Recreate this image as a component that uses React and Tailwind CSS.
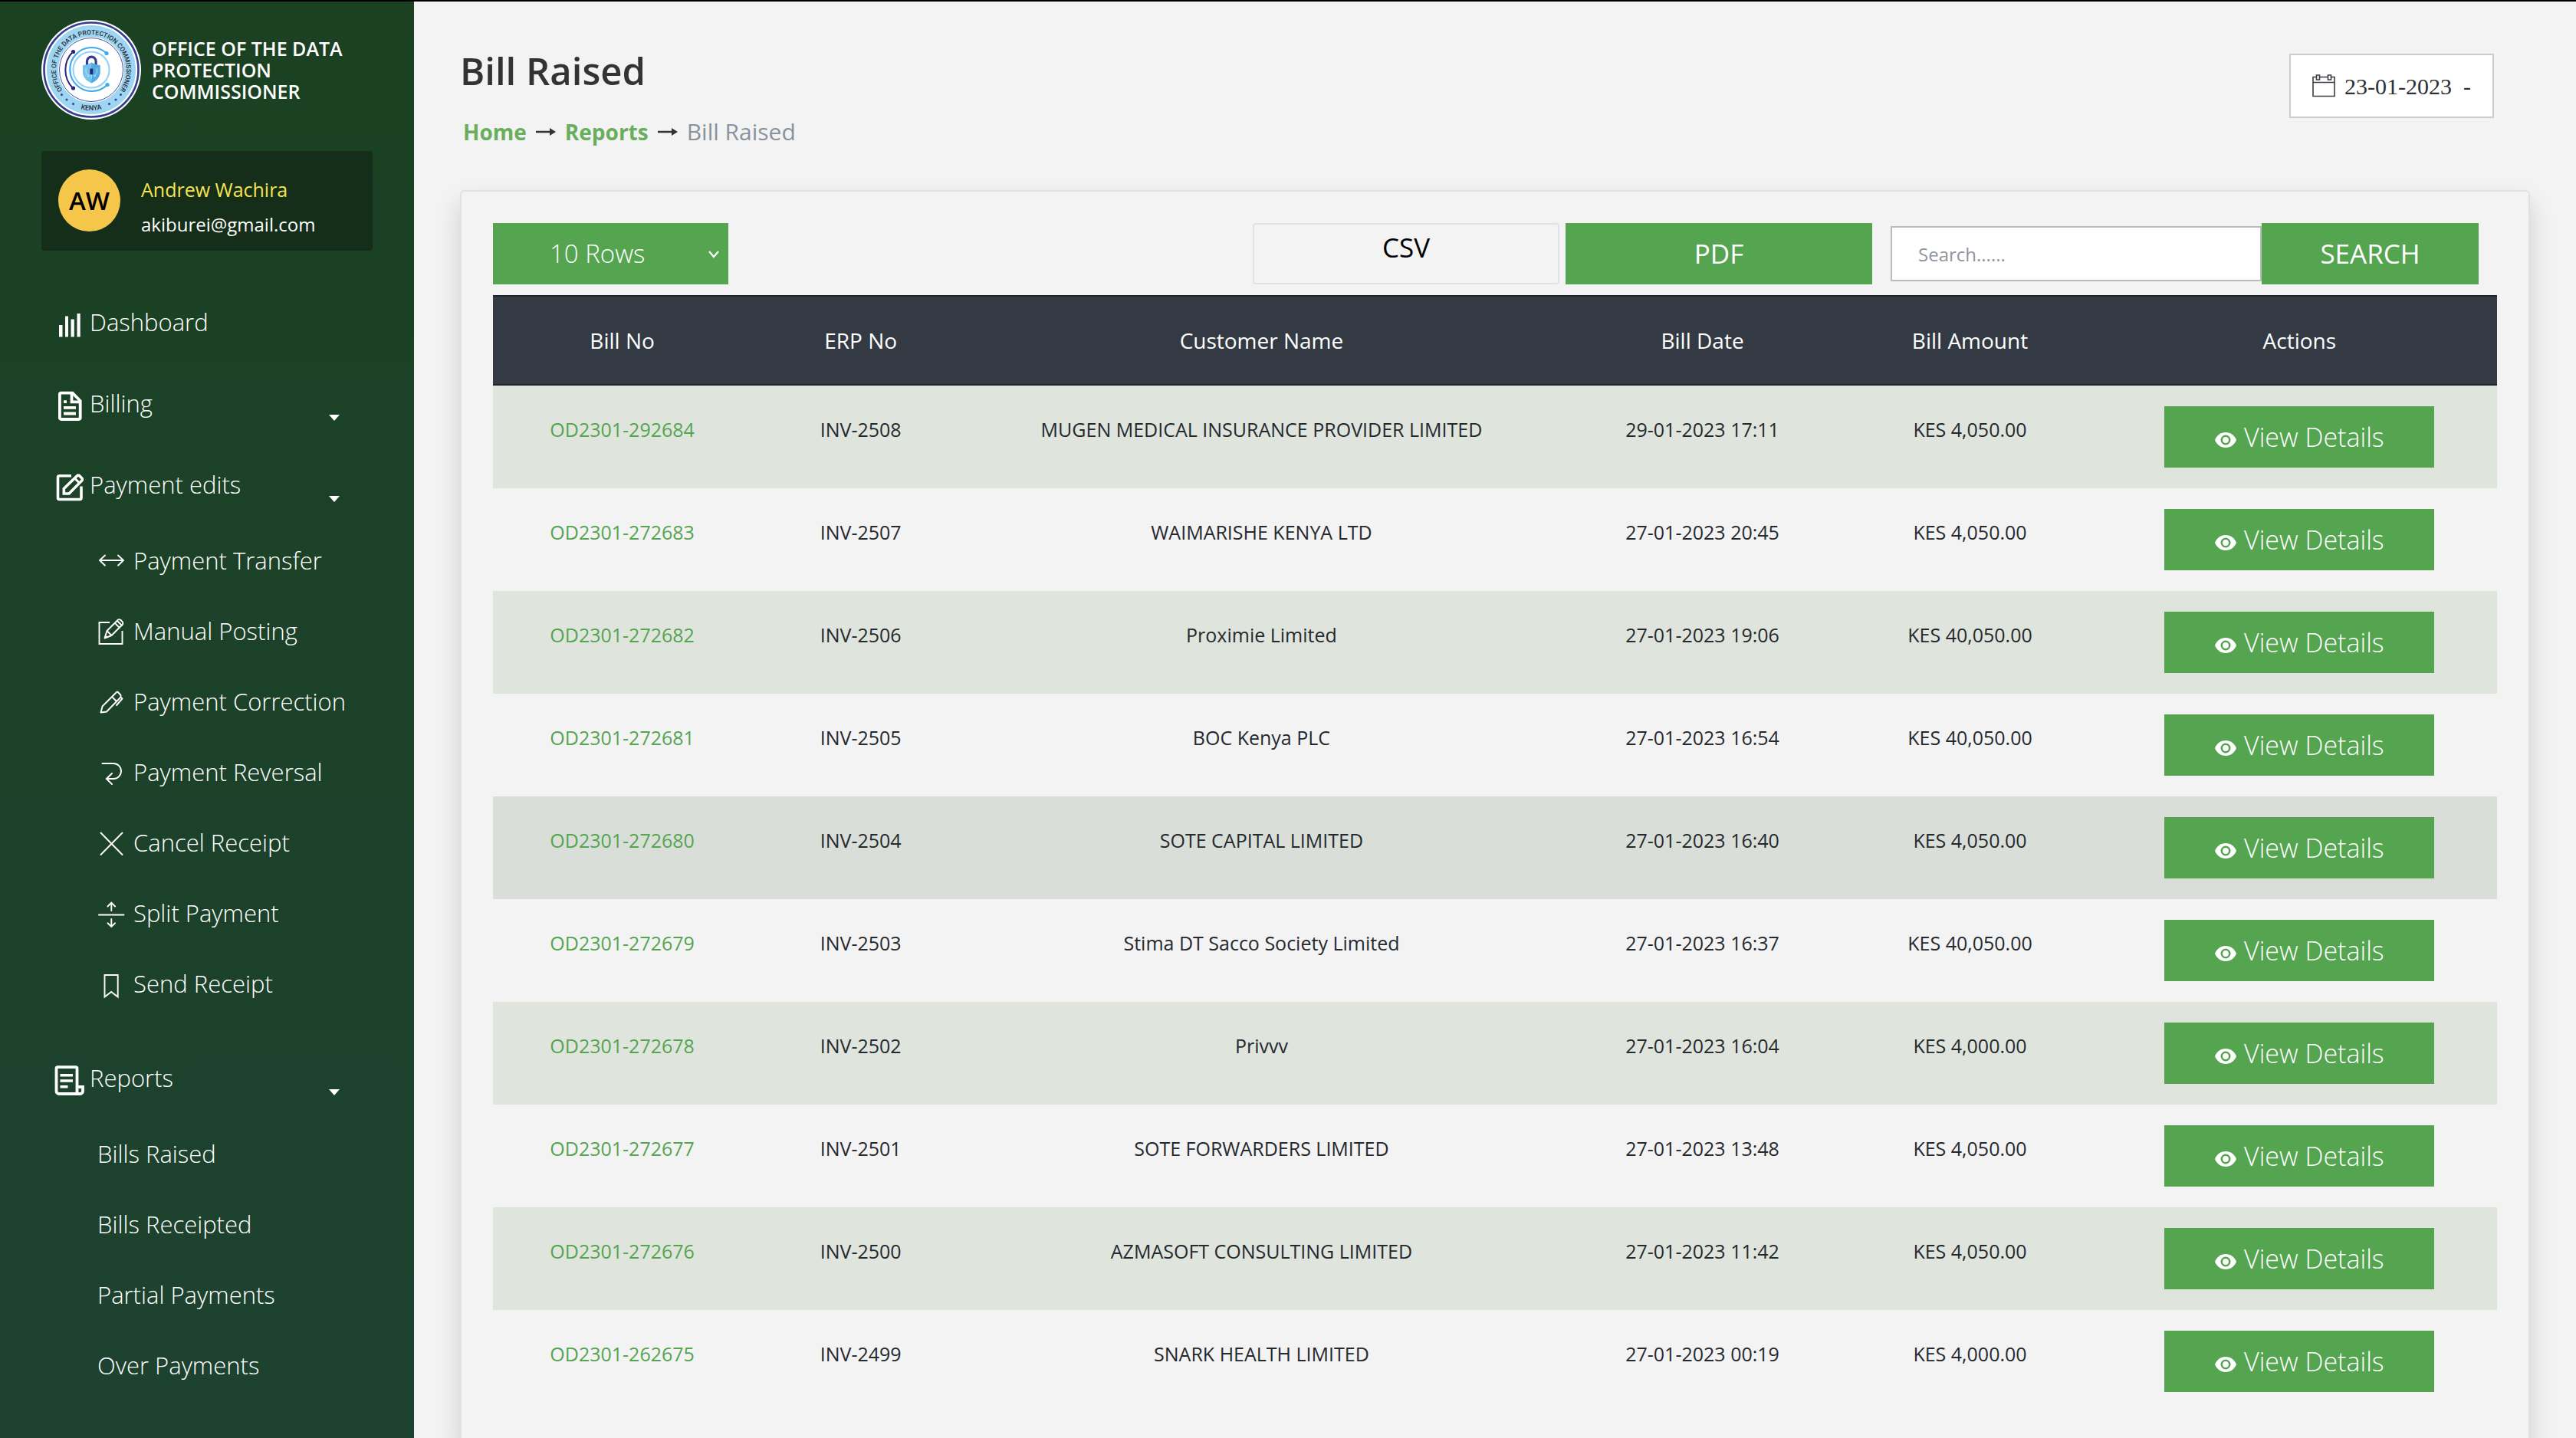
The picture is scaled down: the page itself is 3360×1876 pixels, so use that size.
import React from "react";

const rows = [
  ["OD2301-292684", "INV-2508", "MUGEN MEDICAL INSURANCE PROVIDER LIMITED", "29-01-2023 17:11", "KES 4,050.00"],
  ["OD2301-272683", "INV-2507", "WAIMARISHE KENYA LTD", "27-01-2023 20:45", "KES 4,050.00"],
  ["OD2301-272682", "INV-2506", "Proximie Limited", "27-01-2023 19:06", "KES 40,050.00"],
  ["OD2301-272681", "INV-2505", "BOC Kenya PLC", "27-01-2023 16:54", "KES 40,050.00"],
  ["OD2301-272680", "INV-2504", "SOTE CAPITAL LIMITED", "27-01-2023 16:40", "KES 4,050.00"],
  ["OD2301-272679", "INV-2503", "Stima DT Sacco Society Limited", "27-01-2023 16:37", "KES 40,050.00"],
  ["OD2301-272678", "INV-2502", "Privvv", "27-01-2023 16:04", "KES 4,000.00"],
  ["OD2301-272677", "INV-2501", "SOTE FORWARDERS LIMITED", "27-01-2023 13:48", "KES 4,050.00"],
  ["OD2301-272676", "INV-2500", "AZMASOFT CONSULTING LIMITED", "27-01-2023 11:42", "KES 4,050.00"],
  ["OD2301-262675", "INV-2499", "SNARK HEALTH LIMITED", "27-01-2023 00:19", "KES 4,000.00"],
];
const ACTIVE_ROW = 4;

function Logo() {
  return (
    <svg viewBox="0 0 130 130" className="size-[130px] shrink-0" role="img" aria-label="Office of the Data Protection Commissioner, Kenya">
      <circle cx="65" cy="65" r="65" fill="#fff" />
      <circle cx="65" cy="65" r="61.5" fill="none" stroke="#343c92" strokeWidth="2.6" />
      <circle cx="65" cy="65" r="50.5" fill="none" stroke="#9dd5f3" strokeWidth="15" />
      <circle cx="65" cy="65" r="41.5" fill="none" stroke="#343c92" strokeWidth="0.9" />
      <defs>
        <path id="seal-top" d="M29.8 94.6A46 46 0 1 1 100.2 94.6" />
        <path id="seal-bottom" d="M12 65A53 53 0 0 0 118 65" />
      </defs>
      <text fill="#2b2b33" fontSize="8.5" fontWeight="500" fontFamily="Roboto, sans-serif" textAnchor="middle">
        <textPath href="#seal-top" startOffset="50%">OFFICE OF THE DATA PROTECTION COMMISSIONER</textPath>
      </text>
      <text fill="#2b2b33" fontSize="9" fontWeight="500" fontFamily="Roboto, sans-serif" textAnchor="middle">
        <textPath href="#seal-bottom" startOffset="50%">KENYA</textPath>
      </text>
      <g fill="#343c92">
        <circle cx="26.5" cy="97.5" r="1.5" /><circle cx="33" cy="104" r="1.5" /><circle cx="41.5" cy="109.5" r="1.5" />
        <circle cx="88.5" cy="109.5" r="1.5" /><circle cx="97" cy="104" r="1.5" /><circle cx="103.5" cy="97.5" r="1.5" />
      </g>
      <g fill="none" strokeLinecap="round">
        <path d="M41 41.500A34 34 0 0 0 41 89" stroke="#26247b" strokeWidth="2" />
        <path d="M85 43.500A28.500 28.500 0 1 0 86 84.500" stroke="#42aaea" strokeWidth="2.2" />
        <circle cx="65" cy="65" r="23.500" stroke="#9ad4f4" strokeWidth="2.200" />
        <path d="M59.500 59v-5a5.800 5.800 0 0 1 11.600 0v5" stroke="#343c92" strokeWidth="3.200" />
      </g>
      <g fill="#26247b"><circle cx="41.500" cy="41.500" r="2.600" /><circle cx="41.500" cy="89" r="2.600" /></g>
      <g fill="#42aaea"><circle cx="85" cy="43.500" r="2.600" /><circle cx="86" cy="84.500" r="2.600" /></g>
      <path d="M65.300 55.500C61.500 58 58 59 54 59v9c0 7 5 11.500 11.300 14.500C71.500 79.500 76.500 75 76.500 68v-9C72.500 59 69 58 65.300 55.500z" fill="#72c2ec" />
      <path d="M65.300 55.500v27C71.500 79.500 76.500 75 76.500 68v-9C72.500 59 69 58 65.300 55.500z" fill="#4fabe0" />
      <path d="M63.300 63.500h4v7.500h-4z" fill="#26247b" />
      <g fill="none" stroke="#d8f0fb" strokeWidth="0.700"><path d="M58 63v6l2.500 3M72.500 63v6l-2.500 3M65.300 72v5" /><circle cx="61" cy="73" r="1" /><circle cx="69.500" cy="73" r="1" /></g>
    </svg>
  );
}

const mainIcon = "h-12 w-10 shrink-0";
const DashboardIcon = () => (
  <svg viewBox="0 0 40 48" className={mainIcon} fill="#fff" aria-hidden="true">
    <path d="M6 28h4.500v15.500H6zM14 16.500h4v27h-4zM21.500 20.500h4.300v23h-4.300zM29.500 13h4.200v30.500h-4.200z" />
  </svg>
);
const BillingIcon = () => (
  <svg viewBox="0 0 40 48" className={mainIcon} fill="none" stroke="#fff" strokeWidth="3.800" aria-hidden="true">
    <path d="M8.700 10.700H23.500L33.700 21V43.200a1.800 1.800 0 0 1-1.800 1.800H8.700a1.800 1.800 0 0 1-1.800-1.800V12.500a1.800 1.800 0 0 1 1.800-1.800z" />
    <path d="M22.500 11V22.300H33.500" />
    <path d="M12 22.200h4M12 29.800h16M12 37.500h16" />
  </svg>
);
const EditsIcon = () => (
  <svg viewBox="0 0 40 48" className={mainIcon} fill="none" stroke="#fff" strokeWidth="3.600" strokeLinejoin="round" aria-hidden="true">
    <path d="M22 12.700H6.500a2 2 0 0 0-2 2V41.500a2 2 0 0 0 2 2H33a2 2 0 0 0 2-2V26.500" />
    <path d="M12.300 36V29.500L29.500 12.800a2.200 2.200 0 0 1 3.200 0l3 3a2.200 2.200 0 0 1 0 3.200L19 36z" strokeLinejoin="miter" />
    <path d="M26.500 16l6 6" strokeWidth="3" />
  </svg>
);
const ReportsIcon = () => (
  <svg viewBox="0 0 40 48" className={mainIcon} fill="none" stroke="#fff" strokeWidth="3.800" aria-hidden="true">
    <path d="M29.500 45H6a3.500 3.500 0 0 1-3.500-3.500V12a1.800 1.800 0 0 1 1.800-1.800H27.700A1.800 1.800 0 0 1 29.500 12z" />
    <path d="M29.500 36H37v5.500A3.500 3.500 0 0 1 33.500 45H28" />
    <path d="M7.500 20.700H24M7.500 28H24M7.500 35.700H17.500" strokeWidth="3.500" />
  </svg>
);

const SubIcon = ({ children }) => (
  <svg viewBox="0 0 36 36" className="size-9 shrink-0 overflow-visible" fill="none" stroke="#fff" strokeWidth="1.900" strokeLinecap="round" aria-hidden="true">
    {children}
  </svg>
);
const subItems = [
  ["Payment Transfer", <path d="M2 18H33M9 11.500L2 18l7 6.700M26 11.500L33 18l-7 6.700" />],
  ["Manual Posting", <><path d="M15 7H1.500V35H31.500V18" strokeLinecap="butt" /><path d="M8.500 27.500L11.500 18 25.500 4a2.800 2.800 0 0 1 4 0l2 2a2.800 2.800 0 0 1 0 4L17.500 24zM11.500 18l6 6M22 8l6 6M25 5l6 6M9.500 24.500l2 2" strokeLinejoin="round" /></>],
  ["Payment Correction", <path d="M3.500 32.500L5.500 25V24.500L24 6q1-1 2 0l3.500 4v2.500L11 31.500zM18 12l6 6M29.500 12.500l2 2L24 23" strokeLinejoin="round" />],
  ["Payment Reversal", <path d="M5.500 7H20a10 10 0 0 1 0 20H11M18 20L10.800 27l7.200 7" />],
  ["Cancel Receipt", <path d="M3.500 5.500L31.500 34M31.500 5.500L3.500 34" />],
  ["Split Payment", <path d="M1 20.500H33.500M17.300 15V5M12.500 9.500L17.300 4.700l4.800 4.800M17.300 26V36M12.500 31.300L17.300 36l4.800-4.700" />],
  ["Send Receipt", <path d="M8.500 7H25.700V35.500L17.100 29 8.500 35.500z" strokeLinecap="butt" />],
];
const reportItems = ["Bills Raised", "Bills Receipted", "Partial Payments", "Over Payments"];

function NavItem({ icon, label, expandable }) {
  const Tag = expandable ? "button" : "a";
  const props = expandable ? { type: "button" } : { href: "#" };
  return (
    <Tag {...props} className="flex h-[106px] w-full items-center gap-1.5 pl-[71px] pr-[97px] text-left text-[31px] font-light text-white">
      {icon}
      <span>{label}</span>
      {expandable && (
        <svg viewBox="0 0 14 8" className="mb-[30px] ml-auto h-2 w-3.5 self-end" fill="#fff" aria-hidden="true"><path d="M0 0H14L7 8z" /></svg>
      )}
    </Tag>
  );
}

function Sidebar() {
  return (
    <aside className="w-[540px] shrink-0 bg-linear-to-b from-[#1b4122] to-[#1d4230] pt-6">
      <div className="flex items-center gap-3.5 px-[54px]">
        <Logo />
        <p className="whitespace-nowrap text-[25px]/7 font-semibold text-white">OFFICE OF THE DATA<br />PROTECTION<br />COMMISSIONER</p>
      </div>
      <div className="mx-[54px] mt-[41px] flex h-[130px] rounded bg-[#142e1a] pl-[22px] pt-6">
        <div className="flex size-[81px] shrink-0 items-center justify-center rounded-full bg-[#f6c64b] text-[33px] font-semibold text-black">AW</div>
        <div className="ml-[27px] mt-1 text-2xl/[45px]">
          <p className="text-[25px]/[45px] text-[#f8e44f]">Andrew Wachira</p>
          <p className="text-white">akiburei@gmail.com</p>
        </div>
      </div>
      <nav className="mt-10">
        <NavItem icon={<DashboardIcon />} label="Dashboard" />
        <NavItem icon={<BillingIcon />} label="Billing" expandable />
        <NavItem icon={<EditsIcon />} label="Payment edits" expandable />
        <ul className="pb-6">
          {subItems.map(([label, drawing]) => (
            <li key={label}>
              <a href="#" className="flex h-[92px] items-center gap-2.5 pl-32 text-[31px] font-light text-white">
                <SubIcon>{drawing}</SubIcon>
                {label}
              </a>
            </li>
          ))}
        </ul>
        <NavItem icon={<ReportsIcon />} label="Reports" expandable />
        <ul>
          {reportItems.map((label) => (
            <li key={label}>
              <a href="#" className="flex h-[92px] items-center pl-[127px] text-[31px] font-light text-white">{label}</a>
            </li>
          ))}
        </ul>
      </nav>
    </aside>
  );
}

const Arrow = () => (
  <svg viewBox="0 0 26 12" className="h-3 w-[26px]" fill="#333" aria-hidden="true"><path d="M0 4.800H18V1L26 6l-8 5V7.200H0z" /></svg>
);

function PageHeader() {
  return (
    <header className="flex items-start justify-between">
      <div>
        <h1 className="text-[49px]/[56px] font-semibold text-[#333]">Bill Raised</h1>
        <nav aria-label="Breadcrumb" className="mt-8 flex items-center gap-3 pl-1 text-[28px]/10">
          <a href="#" className="font-bold text-[#69ae5d]">Home</a>
          <Arrow />
          <a href="#" className="font-bold text-[#69ae5d]">Reports</a>
          <Arrow />
          <span className="text-[30px]/10 text-[#8a929b]">Bill Raised</span>
        </nav>
      </div>
      <button type="button" className="mr-[47px] mt-1.5 flex h-[84px] w-[267px] items-center gap-3 border-2 border-[#ccc] bg-white pl-7 font-['Liberation_Serif',serif] text-[30px] text-[#2c3036]">
        <svg viewBox="0 0 30 30" className="size-[30px] shrink-0" fill="none" stroke="#3a3e43" strokeWidth="1.600" aria-hidden="true">
          <path d="M5.500 3.500H1V28.500H29V3.500H24.500M9.500 3.500H20.500M1 10.500H29M5.500 1H9.500V7H5.500zM20.500 1H24.500V7H20.500z" />
        </svg>
        <span className="whitespace-pre">23-01-2023  -</span>
      </button>
    </header>
  );
}

function Toolbar() {
  return (
    <div className="mb-3.5 flex items-center">
      <div className="relative">
        <select aria-label="Rows per page" defaultValue="10" className="h-20 w-[307px] appearance-none bg-[#54a450] pl-[74px] text-[33px] font-light text-white">
          <option value="10">10 Rows</option>
          <option value="25">25 Rows</option>
          <option value="50">50 Rows</option>
        </select>
        <svg viewBox="0 0 14 10" className="pointer-events-none absolute right-3 top-9 h-2.5 w-3.5" fill="none" stroke="#fff" strokeWidth="2.200" aria-hidden="true"><path d="M1 1l6 7 6-7" /></svg>
      </div>
      <button type="button" className="ml-auto h-20 w-[400px] rounded border-2 border-[#dee2e6] pb-4 text-[35px] text-black">CSV</button>
      <button type="button" className="ml-2 h-20 w-[400px] bg-[#54a450] text-[35px] text-white">PDF</button>
      <form className="ml-6 mr-6 flex items-center" onSubmit={(e) => e.preventDefault()}>
        <input type="text" aria-label="Search" placeholder="Search......" className="h-[72px] w-[484px] border-2 border-[#bbb] bg-white px-[34px] text-2xl text-[#333] placeholder:text-[#8f959c]" />
        <button type="submit" className="h-20 w-[283px] bg-[#54a450] text-[35px] text-white">SEARCH</button>
      </form>
    </div>
  );
}

const EyeIcon = () => (
  <svg viewBox="0 0 28 20" className="mt-2 h-5 w-7" aria-hidden="true">
    <path d="M14 0C7.500 0 2.300 4 0 10c2.300 6 7.500 10 14 10s11.700-4 14-10C25.700 4 20.500 0 14 0z" fill="#fff" />
    <circle cx="14" cy="10" r="5.200" fill="#fff" stroke="#54a450" strokeWidth="2.600" />
  </svg>
);

function BillTable() {
  return (
    <table className="w-full table-fixed border-collapse text-center">
      <colgroup>
        <col className="w-[12.9%]" /><col className="w-[10.9%]" /><col className="w-[29.1%]" /><col className="w-[14.9%]" /><col className="w-[11.8%]" /><col />
      </colgroup>
      <thead>
        <tr className="h-[118px] bg-[#333a44] text-[28px] text-white shadow-[inset_0_2px_#212529,inset_0_-2px_#212529]">
          {["Bill No", "ERP No", "Customer Name", "Bill Date", "Bill Amount"].map((h) => (
            <th key={h} scope="col" className="font-medium">{h}</th>
          ))}
          <th scope="col" className="pl-[18px] font-medium">Actions</th>
        </tr>
      </thead>
      <tbody>
        {rows.map((row, i) => (
          <tr key={row[0]} className={i === ACTIVE_ROW ? "bg-[#d9dfd8]" : i % 2 === 0 ? "bg-[#dfe4dd]" : ""}>
            {row.map((cell, c) => (
              <td key={c} className="whitespace-nowrap pt-[39px] align-top text-[25px]/9 font-medium text-[#25292e]">
                {c === 0 ? <a href="#" className="text-[#54a450]">{cell}</a> : cell}
              </td>
            ))}
            <td className="py-[27px] pl-[18px]">
              <button type="button" className="mx-auto flex h-20 w-[352px] items-center justify-center gap-2.5 bg-[#54a450] text-[34px] font-light text-white">
                <EyeIcon />
                View Details
              </button>
            </td>
          </tr>
        ))}
      </tbody>
    </table>
  );
}

export default function App() {
  return (
    <div className="flex h-screen overflow-hidden border-t-2 border-black bg-[#f3f3f3] font-['Open_Sans','Noto_Sans',sans-serif]">
      <Sidebar />
      <main className="min-w-0 flex-1 px-[60px] pt-[62px]">
        <PageHeader />
        <section className="mt-14 rounded-md border-2 border-[#dee2e6] px-[41px] pb-10 pt-[41px] shadow-[0_16px_32px_rgba(0,0,0,0.15)]">
          <Toolbar />
          <BillTable />
        </section>
      </main>
    </div>
  );
}
